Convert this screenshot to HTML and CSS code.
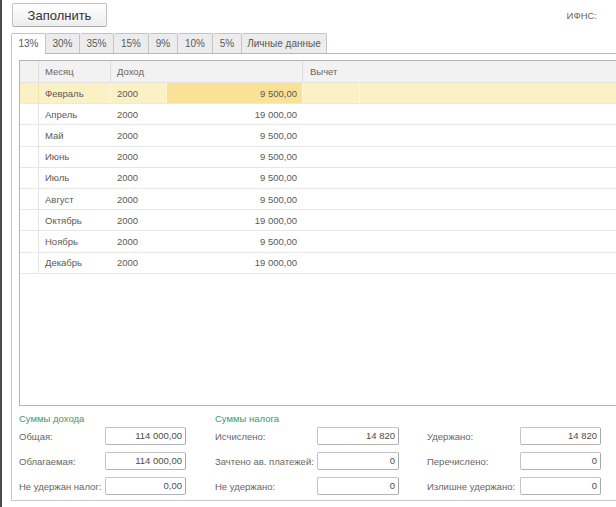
FILE: index.html
```html
<!DOCTYPE html>
<html lang="ru">
<head>
<meta charset="utf-8">
<title>НДФЛ</title>
<link rel="stylesheet" href="styles.css">
</head>
<body>
<div class="window">
  <div class="topbar">
    <button class="btn">Заполнить</button>
    <span class="ifns">ИФНС:</span>
  </div>
  <div class="tabs">
    <div class="tab active">13%</div>
    <div class="tab">30%</div>
    <div class="tab">35%</div>
    <div class="tab">15%</div>
    <div class="tab">9%</div>
    <div class="tab">10%</div>
    <div class="tab">5%</div>
    <div class="tab">Личные данные</div>
  </div>
  <div class="panel">
    <div class="table">
      <div class="row head">
        <div class="c ind"></div>
        <div class="c month">Месяц</div>
        <div class="c income-h">Доход</div>
        <div class="c deduct-h">Вычет</div>
      </div>
      <div class="row sel">
        <div class="c ind"></div>
        <div class="c month">Февраль</div>
        <div class="c code">2000</div>
        <div class="c sum cur">9 500,00</div>
        <div class="c ded"></div>
        <div class="c rest"></div>
      </div>
      <div class="row">
        <div class="c ind"></div>
        <div class="c month">Апрель</div>
        <div class="c code">2000</div>
        <div class="c sum">19 000,00</div>
        <div class="c ded"></div>
        <div class="c rest"></div>
      </div>
      <div class="row">
        <div class="c ind"></div>
        <div class="c month">Май</div>
        <div class="c code">2000</div>
        <div class="c sum">9 500,00</div>
        <div class="c ded"></div>
        <div class="c rest"></div>
      </div>
      <div class="row">
        <div class="c ind"></div>
        <div class="c month">Июнь</div>
        <div class="c code">2000</div>
        <div class="c sum">9 500,00</div>
        <div class="c ded"></div>
        <div class="c rest"></div>
      </div>
      <div class="row">
        <div class="c ind"></div>
        <div class="c month">Июль</div>
        <div class="c code">2000</div>
        <div class="c sum">9 500,00</div>
        <div class="c ded"></div>
        <div class="c rest"></div>
      </div>
      <div class="row">
        <div class="c ind"></div>
        <div class="c month">Август</div>
        <div class="c code">2000</div>
        <div class="c sum">9 500,00</div>
        <div class="c ded"></div>
        <div class="c rest"></div>
      </div>
      <div class="row">
        <div class="c ind"></div>
        <div class="c month">Октябрь</div>
        <div class="c code">2000</div>
        <div class="c sum">19 000,00</div>
        <div class="c ded"></div>
        <div class="c rest"></div>
      </div>
      <div class="row">
        <div class="c ind"></div>
        <div class="c month">Ноябрь</div>
        <div class="c code">2000</div>
        <div class="c sum">9 500,00</div>
        <div class="c ded"></div>
        <div class="c rest"></div>
      </div>
      <div class="row">
        <div class="c ind"></div>
        <div class="c month">Декабрь</div>
        <div class="c code">2000</div>
        <div class="c sum">19 000,00</div>
        <div class="c ded"></div>
        <div class="c rest"></div>
      </div>
    </div>

    <div class="sums">
      <div class="group g1">
        <div class="gtitle">Суммы дохода</div>
        <div class="fields">
          <span class="lbl">Общая:</span><span class="inp">114 000,00</span>
          <span class="lbl">Облагаемая:</span><span class="inp">114 000,00</span>
          <span class="lbl">Не удержан налог:</span><span class="inp">0,00</span>
        </div>
      </div>
      <div class="group g2">
        <div class="gtitle">Суммы налога</div>
        <div class="fields">
          <span class="lbl">Исчислено:</span><span class="inp">14 820</span>
          <span class="lbl">Зачтено ав. платежей:</span><span class="inp">0</span>
          <span class="lbl">Не удержано:</span><span class="inp">0</span>
        </div>
      </div>
      <div class="group g3">
        <div class="gtitle"></div>
        <div class="fields">
          <span class="lbl">Удержано:</span><span class="inp">14 820</span>
          <span class="lbl">Перечислено:</span><span class="inp">0</span>
          <span class="lbl">Излишне удержано:</span><span class="inp">0</span>
        </div>
      </div>
    </div>
  </div>
</div>
</body>
</html>
```

FILE: styles.css
```css
html, body {
  margin: 0;
  padding: 0;
  background: #ffffff;
  overflow: hidden;
}

body {
  width: 616px;
  height: 507px;
  font-family: "Liberation Sans", Arial, sans-serif;
  font-size: 9.5px;
  color: #5a5a5a;
}

.window {
  box-sizing: border-box;
  width: 616px;
  height: 507px;
  border-left: 2px solid #4b4b4b;
  overflow: hidden;
}

/* top bar */
.topbar {
  display: flex;
  align-items: center;
  height: 33px;
}

.btn {
  box-sizing: border-box;
  margin: 0 0 3px 10px;
  width: 95px;
  height: 24px;
  padding: 0;
  font-family: "Liberation Sans", Arial, sans-serif;
  font-size: 13px;
  color: #333333;
  background: linear-gradient(#ffffff, #ededed);
  border: 1px solid #c2c2c2;
  border-bottom-color: #a9a9a9;
  border-radius: 2px;
}

.ifns {
  margin-left: auto;
  margin-right: 19px;
  margin-bottom: 3px;
  font-size: 9.5px;
  color: #666666;
}

/* tabs */
.tabs {
  display: flex;
  height: 20px;
  margin-left: 9px;
}

.tab {
  box-sizing: border-box;
  height: 20px;
  line-height: 19px;
  padding: 0 5px;
  font-size: 10px;
  color: #5a5a5a;
  white-space: nowrap;
  text-align: center;
  background: #ececec;
  border: 1px solid #c4c4c4;
  border-left: none;
  border-bottom: none;
  border-radius: 2px 2px 0 0;
}

.tab:nth-child(1) { width: 34px; }
.tab:nth-child(2) { width: 34px; }
.tab:nth-child(3) { width: 34px; }
.tab:nth-child(4) { width: 35px; }
.tab:nth-child(5) { width: 29px; }
.tab:nth-child(6) { width: 35px; }
.tab:nth-child(7) { width: 29px; }
.tab:nth-child(8) { width: 85px; }

.tab.active {
  position: relative;
  z-index: 1;
  height: 21px;
  margin-bottom: -1px;
  background: #ffffff;
  border-left: 1px solid #c4c4c4;
  width: 35px;
}

/* panel */
.panel {
  box-sizing: border-box;
  width: 800px;
  margin-left: 9px;
  border-top: 1px solid #b9b9b9;
  border-left: 1px solid #c9c9c9;
  border-bottom: 1px solid #c9c9c9;
  padding: 6px 0 5px 7px;
}

/* table */
.table {
  box-sizing: border-box;
  height: 346px;
  border: 1px solid #b5b5b5;
  border-right: none;
}

.row {
  display: grid;
  grid-template-columns: 19px 72px 56px 136px 57px 1fr;
  height: 21.2px;
  box-sizing: border-box;
  border-bottom: 1px solid #e8e8e8;
}

.row.head {
  height: 22px;
  background: #f2f2f2;
  border-bottom: 1px solid #e2e2e2;
  color: #666666;
}

.c {
  box-sizing: border-box;
  display: flex;
  align-items: center;
  padding: 0 6px;
  white-space: nowrap;
  border-right: 1px solid transparent;
}

.c.ind {
  padding: 0;
  border-right: 1px solid #e3e3e3;
}

.row.head .c.ind { border-right-color: #dcdcdc; }
.row.head .c.month { border-right: 1px solid #dcdcdc; }

.income-h {
  grid-column: 3 / span 2;
  border-right: 1px solid #dcdcdc !important;
}

.deduct-h {
  grid-column: 5 / span 2;
  padding-left: 7px !important;
}

.c.sum {
  justify-content: flex-end;
  padding-right: 5px;
}

.row.sel {
  background: #fcf1c5;
}

.row.sel .c { border-right-color: #fff8dd; }
.row.sel .c.ind { border-right-color: #efe2b4; }

.c.cur {
  background: #f9e296;
}

/* sums */
.sums {
  display: flex;
  padding-top: 7px;
}

.gtitle {
  height: 12px;
  line-height: 12px;
  margin-bottom: 2px;
  font-size: 9.5px;
  color: #3a9a6c;
}

.fields {
  display: grid;
  grid-auto-rows: 18px;
  row-gap: 7px;
  align-items: center;
}

.g1 .fields { grid-template-columns: 86px 81px; }
.g2 { margin-left: 29px; }
.g2 .fields { grid-template-columns: 102px 82px; }
.g3 { margin-left: 28px; }
.g3 .fields { grid-template-columns: 93px 81px; }

.lbl {
  color: #666666;
  white-space: nowrap;
}

.inp {
  box-sizing: border-box;
  height: 18px;
  line-height: 16px;
  padding: 0 3px;
  text-align: right;
  color: #4d4d4d;
  background: #ffffff;
  border: 1px solid #c4c4c4;
  border-right-color: #a8a8a8;
  border-bottom-color: #b4b4b4;
  border-radius: 2px;
}
```
